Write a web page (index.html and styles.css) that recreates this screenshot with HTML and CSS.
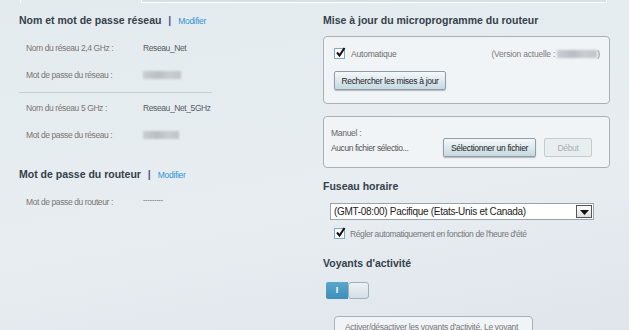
FILE: index.html
```html
<!DOCTYPE html>
<html lang="fr">
  <head>
    <meta charset="utf-8">
    <title>Paramètres du routeur</title>
    <link rel="stylesheet" href="styles.css">
  </head>
  <body>
  <div class="tabStrip">
    <div class="tab activeTab"></div>
    <div class="tab"></div>
  </div>
  <div class="page">
    <div class="column">
      <h2 class="sectionTitle">Nom et mot de passe réseau <span class="sep">|</span> <a class="editLink">Modifier</a></h2>
      <div class="fieldRow"><span class="fieldLabel">Nom du réseau 2,4 GHz :</span><span class="fieldValue">Reseau_Net</span></div>
      <div class="fieldRow"><span class="fieldLabel">Mot de passe du réseau :</span><span class="blurred" style="width: 38px;"></span></div>
      <hr class="divider">
      <div class="fieldRow"><span class="fieldLabel">Nom du réseau 5 GHz :</span><span class="fieldValue">Reseau_Net_5GHz</span></div>
      <div class="fieldRow"><span class="fieldLabel">Mot de passe du réseau :</span><span class="blurred" style="width: 36px;"></span></div>

      <h2 class="sectionTitle second">Mot de passe du routeur <span class="sep">|</span> <a class="editLink">Modifier</a></h2>
      <div class="fieldRow routerPass"><span class="fieldLabel">Mot de passe du routeur :</span><span class="fieldValue dashes">---------</span></div>
    </div>

    <div class="column">
      <h2 class="sectionTitle">Mise à jour du microprogramme du routeur</h2>
      <div class="panel autoPanel">
        <div class="checkRow">
          <span class="checkbox"><svg viewBox="0 0 11 11" width="11" height="11"><path d="M2 5.5 L4.5 8.5 L9.5 1" fill="none" stroke="#111" stroke-width="2"/></svg></span>
          <span class="checkText">Automatique</span>
          <span class="version">(Version actuelle : <span class="blurred" style="width: 40px;"></span>)</span>
        </div>
        <button class="btn checkBtn">Rechercher les mises à jour</button>
      </div>

      <div class="panel manualPanel">
        <div class="manualLabel">Manuel :</div>
        <div class="fileRow">
          <span class="fileName">Aucun fichier sélectio...</span>
          <button class="btn fileBtn">Sélectionner un fichier</button>
          <button class="btn startBtn" disabled>Début</button>
        </div>
      </div>

      <h2 class="sectionTitle tzTitle">Fuseau horaire</h2>
      <div class="select">
        <span class="selectText">(GMT-08:00) Pacifique (Etats-Unis et Canada)</span>
        <span class="selectArrow"><svg viewBox="0 0 9 5" width="9" height="5"><path d="M0 0 H9 L4.5 5 Z" fill="#111"/></svg></span>
      </div>
      <div class="checkRow dstRow">
        <span class="checkbox"><svg viewBox="0 0 11 11" width="11" height="11"><path d="M2 5.5 L4.5 8.5 L9.5 1" fill="none" stroke="#111" stroke-width="2"/></svg></span>
        <span class="checkText small">Régler automatiquement en fonction de l'heure d'été</span>
      </div>

      <h2 class="sectionTitle ledTitle">Voyants d'activité</h2>
      <div class="toggle">
        <span class="toggleOn">I</span>
        <span class="toggleKnob"></span>
      </div>
      <div class="hintBox">Activer/désactiver les voyants d'activité. Le voyant</div>
    </div>
  </div>
  </body>
</html>
```
FILE: styles.css
```css
body {
  margin: 0;
  height: 330px;
  overflow: hidden;
  font-family: "Liberation Sans", Arial, sans-serif;
  background: linear-gradient(170deg, #e4ebee 0%, #e7edf1 60%, #dfe5ea 100%);
  color: #333;
}

/* Top tab strip edge */
.tabStrip {
  display: flex;
  margin-left: 20px;
  width: 587px;
  height: 3px;
}
.tab {
  flex: 1;
  background-color: #d6e0e6;
  border-bottom: 1px solid #ffffff;
  border-right: 1px solid #ffffff;
}
.activeTab {
  flex: 0 0 120px;
  background-color: transparent;
  border-left: 1px solid #ffffff;
  border-bottom: none;
}

.page {
  display: grid;
  grid-template-columns: 304px 287px;
  padding-left: 19px;
}

.sectionTitle {
  margin: 10px 0 0 0;
  font-size: 10.5px;
  line-height: 14px;
  font-weight: bold;
  color: #34414b;
}
.sectionTitle.second {
  margin-top: 23px;
}
.sep {
  color: #5b4e8c;
  margin: 0 4px;
}
.editLink {
  font-size: 8.5px;
  font-weight: normal;
  letter-spacing: -0.3px;
  color: #2f95d6;
}

.fieldRow {
  display: flex;
  align-items: center;
  height: 18px;
  margin-top: 9px;
  padding-left: 7px;
  font-size: 8.5px;
  letter-spacing: -0.4px;
}
.fieldRow:first-of-type {
  margin-top: 11px;
}
.routerPass {
  margin-top: 11px;
}
.fieldLabel {
  width: 117px;
  color: #7b756f;
}
.fieldValue {
  color: #555c63;
}
.dashes {
  font-size: 7px;
  letter-spacing: -0.1px;
  margin-top: -5px;
}
.blurred {
  display: inline-block;
  height: 8px;
  background: linear-gradient(90deg, #c9ced3, #b9bec4 40%, #c8cdd2 70%, #bfc4c9);
  filter: blur(1px);
  vertical-align: middle;
}
.divider {
  width: 193px;
  margin: 8px 0 6px 0;
  border: none;
  border-top: 1px solid #c8cdd0;
}
.divider + .fieldRow {
  margin-top: 0;
}

/* Right column */
.panel {
  border: 1px solid #a9b1b8;
  border-radius: 4px;
  background-color: #f1f4f6;
}
.autoPanel {
  margin-top: 9px;
  padding: 10px 9px 0 10px;
  height: 56px;
}
.checkRow {
  display: flex;
  align-items: center;
  height: 13px;
  font-size: 8.5px;
  letter-spacing: -0.2px;
}
.checkbox {
  width: 11px;
  height: 11px;
  box-sizing: border-box;
  border: 1px solid #7fa8c2;
  background-color: #ffffff;
  position: relative;
}
.checkbox svg {
  position: absolute;
  left: 0;
  top: -2px;
}
.checkText {
  margin-left: 6px;
  color: #6e6e6e;
}
.version {
  margin-left: auto;
  color: #7c7c7c;
}
.btn {
  font-family: inherit;
  font-size: 8.5px;
  letter-spacing: -0.3px;
  white-space: nowrap;
  color: #222;
  height: 19px;
  padding: 0;
  border: 1px solid #8e9ea8;
  border-radius: 2px;
  background: linear-gradient(#f4f8fa, #dde9ee 50%, #c6d8e0);
  box-shadow: 0 1px 1px rgba(0, 0, 0, 0.25);
}
.checkBtn {
  display: block;
  margin-top: 11px;
  width: 112px;
}
.manualPanel {
  margin-top: 12px;
  padding: 10px 0 0 7px;
  box-sizing: border-box;
  height: 52px;
}
.manualLabel {
  font-size: 8.5px;
  line-height: 12px;
  letter-spacing: -0.3px;
  color: #666;
}
.fileRow {
  display: flex;
  align-items: center;
  gap: 8px;
  margin-top: -1px;
  font-size: 8.5px;
  letter-spacing: -0.4px;
}
.fileName {
  width: 104px;
  color: #555;
}
.fileBtn {
  width: 93px;
}
.startBtn {
  width: 48px;
  color: #a7adb2;
  background: #e8edf0;
  border-color: #c3cbd1;
  box-shadow: none;
}

.tzTitle {
  margin-top: 11px;
}
.select {
  display: flex;
  align-items: center;
  margin: 10px 0 0 7px;
  width: 264px;
  height: 17px;
  box-sizing: border-box;
  border: 1px solid #9aa3aa;
  background-color: #ffffff;
  font-size: 10px;
  letter-spacing: -0.3px;
}
.selectText {
  padding-left: 3px;
  color: #222;
}
.selectArrow {
  margin-left: auto;
  width: 16px;
  height: 13px;
  margin-right: 1px;
  box-sizing: border-box;
  border: 1px solid #555;
  background: linear-gradient(#ffffff, #dcdcdc);
  display: flex;
  align-items: flex-end;
  justify-content: center;
  padding-bottom: 2px;
}
.dstRow {
  margin: 7px 0 0 11px;
}
.checkText.small {
  margin-left: 5px;
  letter-spacing: -0.4px;
  color: #777;
}

.ledTitle {
  margin-top: 16px;
}
.toggle {
  display: flex;
  margin: 12px 0 0 3px;
  width: 43px;
  height: 17px;
}
.toggleOn {
  width: 22px;
  background: linear-gradient(#5aa7cb, #3b8fb8);
  color: #ffffff;
  font-size: 9px;
  font-weight: bold;
  line-height: 17px;
  text-align: center;
  border-radius: 2px 0 0 2px;
}
.toggleKnob {
  flex: 1;
  box-sizing: border-box;
  border: 1px solid #9fb0ba;
  border-radius: 3px;
  background: linear-gradient(#eef3f5, #d3dfe4);
}
.hintBox {
  margin: 17px 0 0 11px;
  width: 199px;
  height: 40px;
  box-sizing: border-box;
  border: 1px solid #a9b1b8;
  border-radius: 4px;
  background-color: #f1f4f6;
  padding: 5px 0 0 10px;
  font-size: 8.5px;
  line-height: 10px;
  letter-spacing: -0.3px;
  color: #777;
}
```
